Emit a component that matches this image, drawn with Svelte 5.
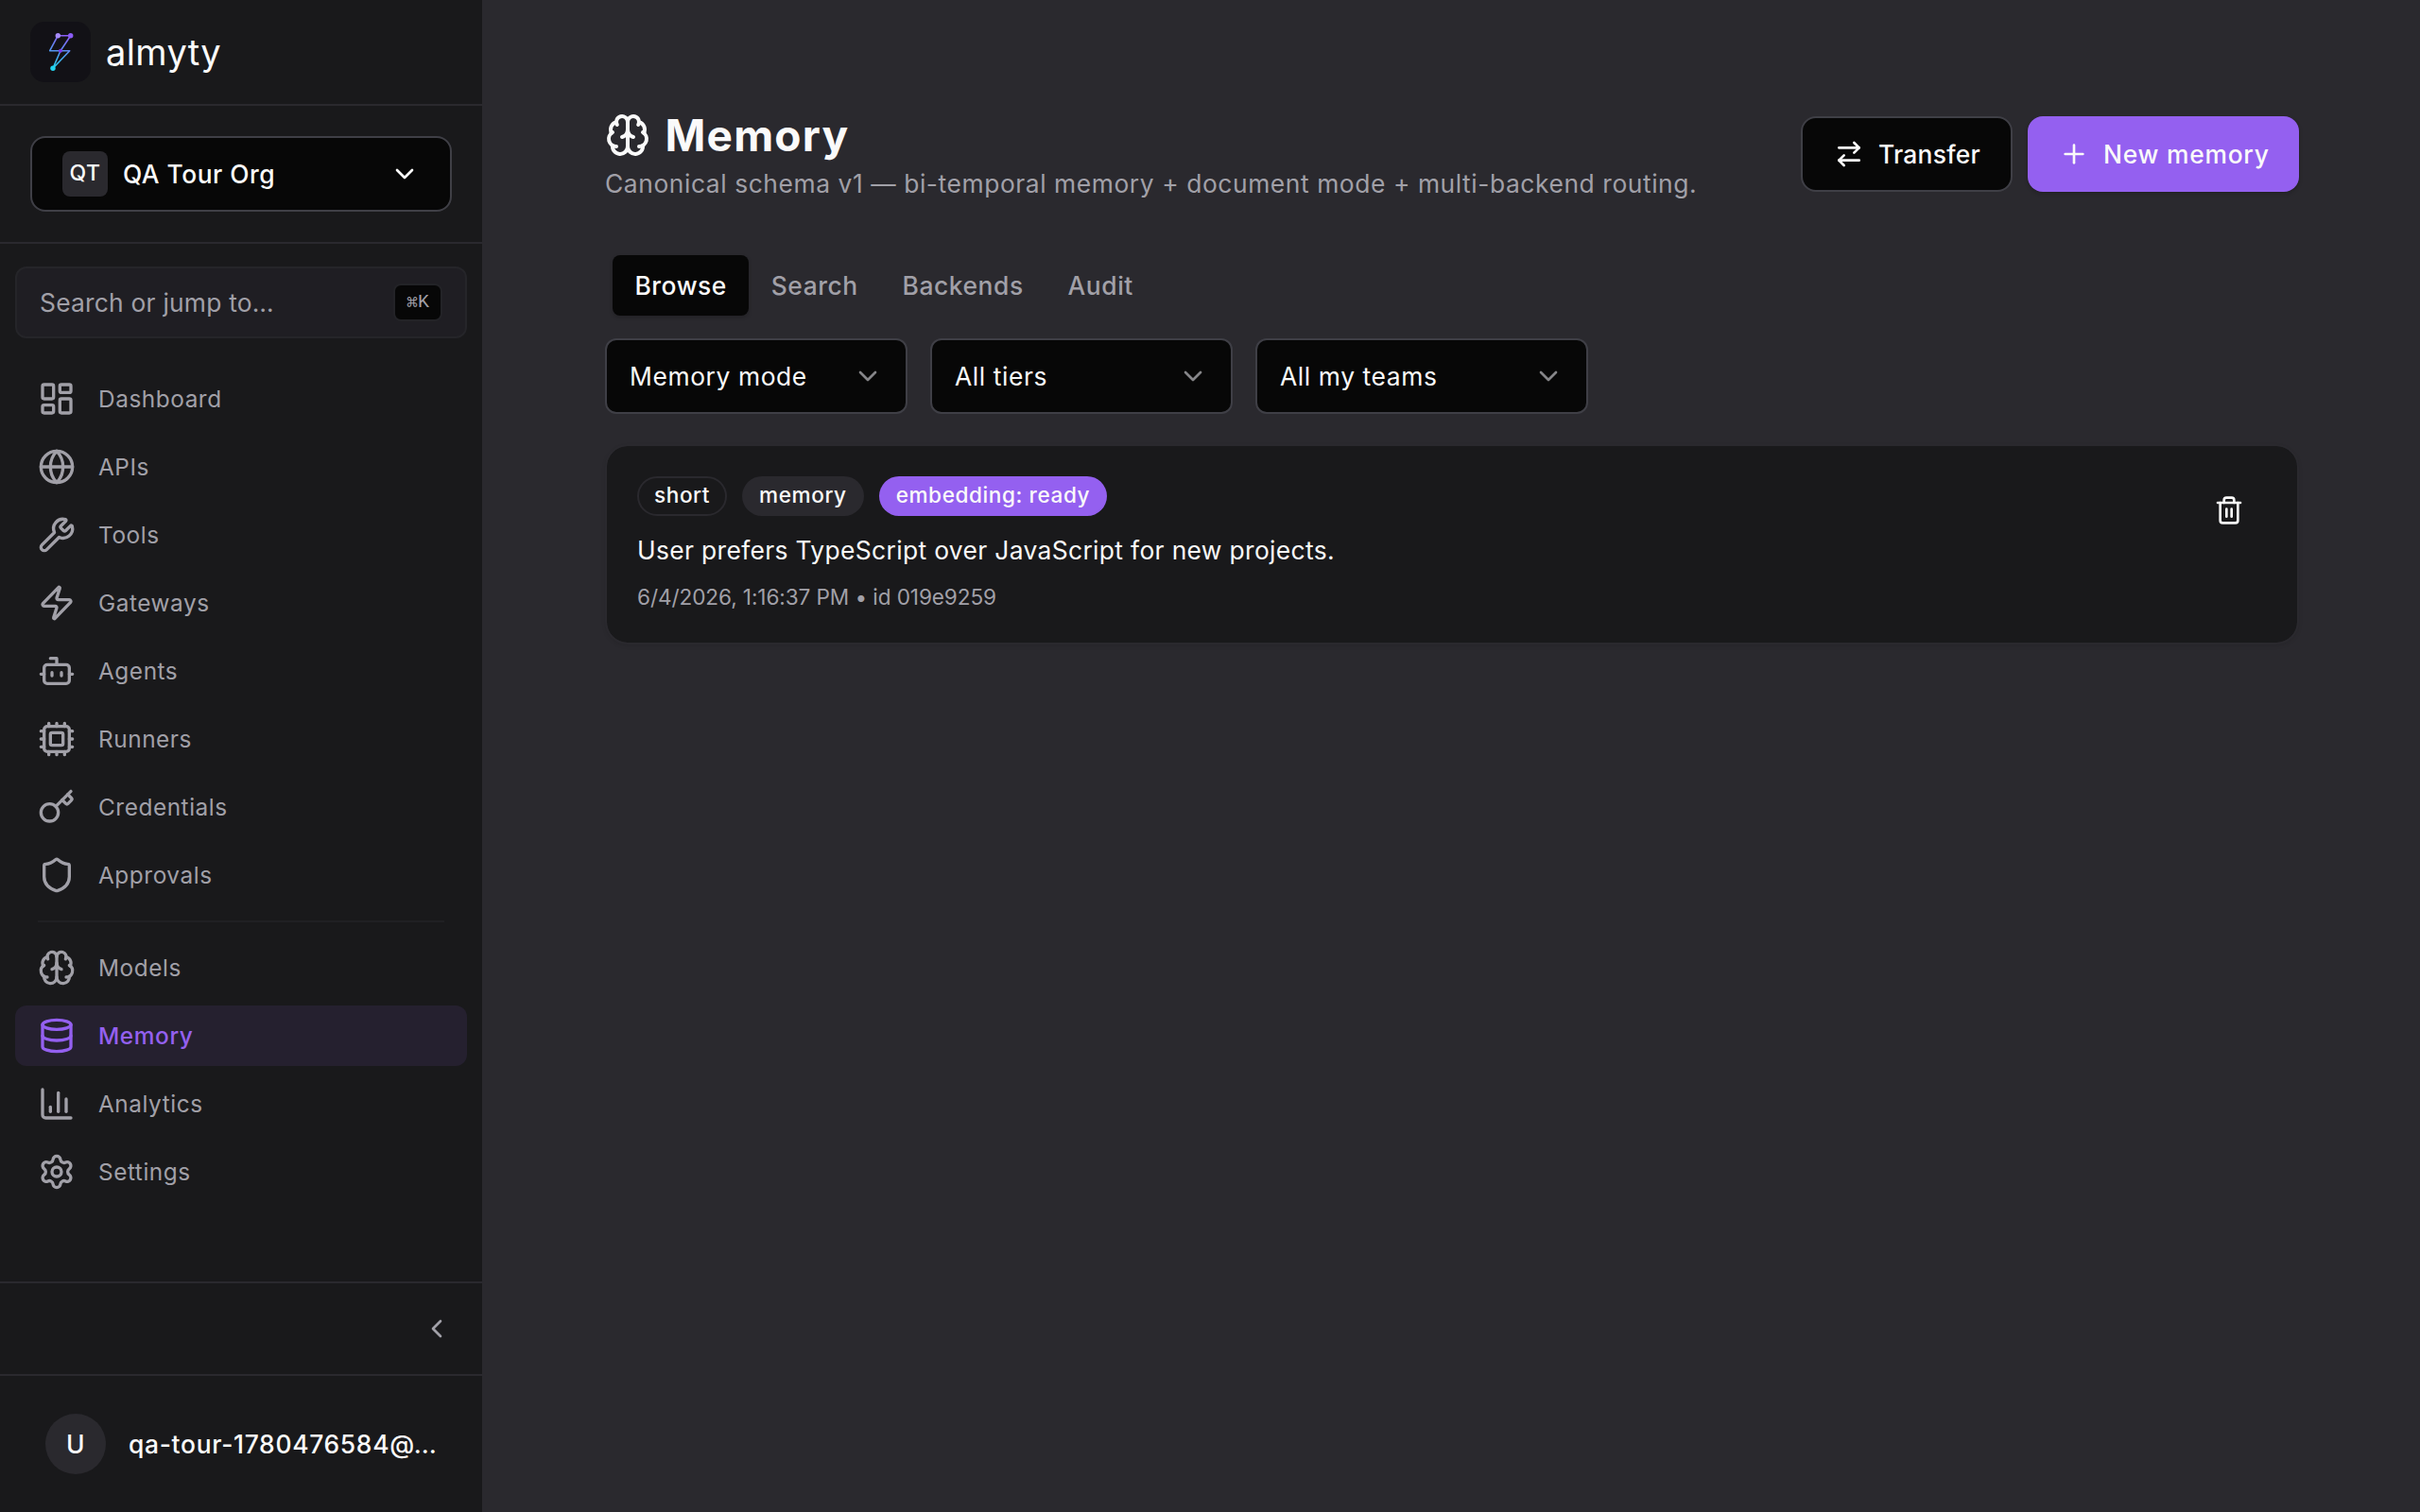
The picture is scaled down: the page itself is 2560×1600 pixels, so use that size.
<script>
  const icons = {
    dashboard: '<rect width="7" height="9" x="3" y="3" rx="1"/><rect width="7" height="5" x="14" y="3" rx="1"/><rect width="7" height="9" x="14" y="12" rx="1"/><rect width="7" height="5" x="3" y="16" rx="1"/>',
    globe: '<circle cx="12" cy="12" r="10"/><path d="M12 2a14.5 14.5 0 0 0 0 20 14.5 14.5 0 0 0 0-20"/><path d="M2 12h20"/>',
    wrench: '<path d="M14.7 6.3a1 1 0 0 0 0 1.4l1.6 1.6a1 1 0 0 0 1.4 0l3.106-3.105c.32-.322.863-.22.983.218a6 6 0 0 1-8.259 7.057l-7.91 7.91a1 1 0 0 1-2.999-3l7.91-7.91a6 6 0 0 1 7.057-8.259c.438.12.54.662.219.984z"/>',
    zap: '<path d="M4 14a1 1 0 0 1-.78-1.63l9.9-10.2a.5.5 0 0 1 .86.46l-1.92 6.02A1 1 0 0 0 13 10h7a1 1 0 0 1 .78 1.63l-9.9 10.2a.5.5 0 0 1-.86-.46l1.92-6.02A1 1 0 0 0 11 14z"/>',
    bot: '<path d="M12 8V4H8"/><rect width="16" height="12" x="4" y="8" rx="2"/><path d="M2 14h2M20 14h2M15 13v2M9 13v2"/>',
    cpu: '<path d="M12 20v2M12 2v2M17 20v2M17 2v2M2 12h2M2 17h2M2 7h2M20 12h2M20 17h2M20 7h2M7 20v2M7 2v2"/><rect x="4" y="4" width="16" height="16" rx="2"/><rect x="8" y="8" width="8" height="8" rx="1"/>',
    key: '<path d="m15.5 7.5 2.3 2.3a1 1 0 0 0 1.4 0l2.1-2.1a1 1 0 0 0 0-1.4L19 4"/><path d="m21 2-9.6 9.6"/><circle cx="7.5" cy="15.5" r="5.5"/>',
    shield: '<path d="M20 13c0 5-3.5 7.5-7.66 8.95a1 1 0 0 1-.67-.01C7.5 20.5 4 18 4 13V6a1 1 0 0 1 1-1c2 0 4.5-1.2 6.24-2.72a1.17 1.17 0 0 1 1.52 0C14.51 3.81 17 5 19 5a1 1 0 0 1 1 1z"/>',
    brain: '<path d="M12 18V5"/><path d="M15 13a4.17 4.17 0 0 1-3-4 4.17 4.17 0 0 1-3 4"/><path d="M17.598 6.5A3 3 0 1 0 12 5a3 3 0 1 0-5.598 1.5"/><path d="M17.997 5.125a4 4 0 0 1 2.526 5.77"/><path d="M18 18a4 4 0 0 0 2-7.464"/><path d="M19.967 17.483A4 4 0 1 1 12 18a4 4 0 1 1-7.967-.517"/><path d="M6 18a4 4 0 0 1-2-7.464"/><path d="M6.003 5.125a4 4 0 0 0-2.526 5.77"/>',
    database: '<ellipse cx="12" cy="5" rx="9" ry="3"/><path d="M3 5V19A9 3 0 0 0 21 19V5"/><path d="M3 12A9 3 0 0 0 21 12"/>',
    chart: '<path d="M3 3v16a2 2 0 0 0 2 2h16"/><path d="M18 17V9"/><path d="M13 17V5"/><path d="M8 17v-3"/>',
    settings: '<path d="M9.671 4.136a2.34 2.34 0 0 1 4.659 0 2.34 2.34 0 0 0 3.319 1.915 2.34 2.34 0 0 1 2.33 4.033 2.34 2.34 0 0 0 0 3.831 2.34 2.34 0 0 1-2.33 4.033 2.34 2.34 0 0 0-3.319 1.915 2.34 2.34 0 0 1-4.659 0 2.34 2.34 0 0 0-3.32-1.915 2.34 2.34 0 0 1-2.33-4.033 2.34 2.34 0 0 0 0-3.831A2.34 2.34 0 0 1 6.35 6.051a2.34 2.34 0 0 0 3.319-1.915"/><circle cx="12" cy="12" r="3"/>',
    down: '<path d="m6 9 6 6 6-6"/>',
    left: '<path d="m15 18-6-6 6-6"/>',
    swap: '<path d="m16 3 4 4-4 4"/><path d="M20 7H4"/><path d="m8 21-4-4 4-4"/><path d="M4 17h16"/>',
    plus: '<path d="M5 12h14"/><path d="M12 5v14"/>',
    trash: '<path d="M10 11v6"/><path d="M14 11v6"/><path d="M19 6v14a2 2 0 0 1-2 2H7a2 2 0 0 1-2-2V6"/><path d="M3 6h18"/><path d="M8 6V4a2 2 0 0 1 2-2h4a2 2 0 0 1 2 2v2"/>',
  };

  const platform = [
    ['Dashboard', 'dashboard'],
    ['APIs', 'globe'],
    ['Tools', 'wrench'],
    ['Gateways', 'zap'],
    ['Agents', 'bot'],
    ['Runners', 'cpu'],
    ['Credentials', 'key'],
    ['Approvals', 'shield'],
  ];
  const workspace = [
    ['Models', 'brain'],
    ['Memory', 'database'],
    ['Analytics', 'chart'],
    ['Settings', 'settings'],
  ];
  const current = 'Memory';
  const tabs = ['Browse', 'Search', 'Backends', 'Audit'];
  const filters = [
    { label: 'Memory mode', wide: false },
    { label: 'All tiers', wide: false },
    { label: 'All my teams', wide: true },
  ];
</script>

{#snippet icon(name, size)}
  <svg class="icon {size}" viewBox="0 0 24 24">{@html icons[name]}</svg>
{/snippet}

{#snippet navItem(label, glyph)}
  <div class="nav-item" class:active={label === current}>
    {@render icon(glyph, 'md')}
    <span>{label}</span>
  </div>
{/snippet}

<div class="app">
  <aside class="sidebar">
    <header class="brand">
      <svg class="logo" viewBox="0 0 64 64">
        <defs>
          <linearGradient id="bolt" gradientUnits="userSpaceOnUse" x1="36" y1="14" x2="26" y2="50">
            <stop offset="0" stop-color="#8b5cf6" />
            <stop offset="0.45" stop-color="#5b8def" />
            <stop offset="1" stop-color="#22d3ee" />
          </linearGradient>
        </defs>
        <rect width="64" height="64" rx="15" fill="#121116" />
        <path d="M29.3 14.7 20.7 30.7H41.7L24 49.3 32 30.7 42.7 14.7Z" fill="none" stroke="url(#bolt)" stroke-width="1.6" stroke-linejoin="round" />
        <circle cx="29.3" cy="14.7" r="2.7" fill="#a78bfa" />
        <circle cx="42.7" cy="14.7" r="2.7" fill="#8b5cf6" />
        <circle cx="32" cy="30.7" r="2" fill="#7c3aed" />
        <circle cx="24" cy="49.3" r="2.7" fill="#22d3ee" />
      </svg>
      <span class="wordmark">almyty</span>
    </header>

    <div class="org">
      <button class="org-button">
        <span class="org-initials">QT</span>
        <span class="org-name">QA Tour Org</span>
        {@render icon('down', 'sm')}
      </button>
    </div>

    <button class="search">
      <span>Search or jump to…</span>
      <kbd><span class="cmd">⌘</span>K</kbd>
    </button>

    <nav>
      {#each platform as [label, glyph]}
        {@render navItem(label, glyph)}
      {/each}
      <hr />
      {#each workspace as [label, glyph]}
        {@render navItem(label, glyph)}
      {/each}
    </nav>

    <div class="collapse">{@render icon('left', 'sm')}</div>

    <footer class="user">
      <span class="avatar">U</span>
      <span>qa-tour-1780476584@…</span>
    </footer>
  </aside>

  <main>
    <div class="page-head">
      <div class="heading">
        <h1>{@render icon('brain', 'lg')}<span>Memory</span></h1>
        <p class="subtitle">Canonical schema v1 — bi-temporal memory + document mode + multi-backend routing.</p>
      </div>
      <div class="actions">
        <button class="btn outline">{@render icon('swap', 'sm')}<span>Transfer</span></button>
        <button class="btn primary">{@render icon('plus', 'sm')}<span>New memory</span></button>
      </div>
    </div>

    <div class="tabs">
      {#each tabs as tab, i}
        <button class="tab" class:selected={i === 0}>{tab}</button>
      {/each}
    </div>

    <div class="filters">
      {#each filters as f}
        <button class="select" class:wide={f.wide}><span>{f.label}</span>{@render icon('down', 'sm')}</button>
      {/each}
    </div>

    <article class="card">
      <div>
        <div class="badges">
          <span class="badge tier">short</span>
          <span class="badge kind">memory</span>
          <span class="badge status">embedding: ready</span>
        </div>
        <p class="content">User prefers TypeScript over JavaScript for new projects.</p>
        <p class="meta">6/4/2026, 1:16:37 PM • id 019e9259</p>
      </div>
      <button class="delete">{@render icon('trash', 'sm')}</button>
    </article>
  </main>
</div>

<style>
  :global(body) {
    background: #2a292e;
  }
  .app {
    display: flex;
    width: 2560px;
    height: 1600px;
    overflow: hidden;
    background: #2a292e;
    color: #fafafa;
    font-family: Inter, 'Liberation Sans', sans-serif;
    font-size: 26.4px;
    line-height: 40px;
    letter-spacing: 0.6px;
    white-space: nowrap;
  }
  button,
  h1,
  p,
  hr,
  kbd,
  span {
    box-sizing: border-box;
    margin: 0;
  }
  button {
    padding: 0;
    border: 0;
    background: none;
    color: inherit;
    font: inherit;
    letter-spacing: inherit;
    text-align: left;
  }
  .icon {
    flex: none;
    fill: none;
    stroke: currentColor;
    stroke-width: 2;
    stroke-linecap: round;
    stroke-linejoin: round;
  }
  .sm { width: 32px; height: 32px; }
  .md { width: 40px; height: 40px; }
  .lg { width: 48px; height: 48px; }

  .sidebar {
    display: flex;
    flex: none;
    flex-direction: column;
    width: 510px;
    background: #19191b;
  }
  .brand {
    display: flex;
    align-items: center;
    gap: 16px;
    box-sizing: border-box;
    height: 112px;
    padding: 0 32px;
    border-bottom: 2px solid #2a292e;
  }
  .logo { width: 64px; height: 64px; }
  .wordmark { font-size: 38px; letter-spacing: 0.4px; }
  .org {
    padding: 32px;
    border-bottom: 2px solid #2a292e;
  }
  .org-button {
    display: flex;
    align-items: center;
    width: 446px;
    height: 80px;
    padding: 0 32px;
    border: 2px solid #3f3f46;
    border-radius: 16px;
    background: #070707;
    font-weight: 500;
    letter-spacing: 0.5px;
  }
  .org-initials {
    width: 48px;
    height: 48px;
    margin-right: 16px;
    border-radius: 8px;
    background: #2a292e;
    font-size: 23px;
    line-height: 46px;
    text-align: center;
  }
  .org-name { flex: 1; }
  .search {
    display: flex;
    align-items: center;
    justify-content: space-between;
    height: 76px;
    margin: 24px 16px 32px;
    padding: 0 24px;
    border: 2px solid #252529;
    border-radius: 12px;
    background: #1f1e23;
    color: #a1a0a8;
    letter-spacing: 0.22px;
  }
  kbd {
    display: flex;
    height: 40px;
    padding: 0 12px;
    border: 2px solid #232327;
    border-radius: 8px;
    background: #070707;
    font-family: 'Liberation Mono', monospace;
    font-size: 20px;
    line-height: 36px;
    letter-spacing: 0;
  }
  .cmd {
    width: 12px;
    font-family: 'DejaVu Sans Mono', monospace;
  }
  nav {
    display: flex;
    flex: 1;
    flex-direction: column;
    gap: 8px;
    padding: 0 16px;
  }
  .nav-item {
    display: flex;
    align-items: center;
    gap: 24px;
    height: 64px;
    padding: 0 24px;
    border-radius: 12px;
    color: #a1a0a8;
    font-size: 24.4px;
    letter-spacing: 0.54px;
  }
  .nav-item.active {
    background: #25202f;
    color: #9460f0;
    font-weight: 500;
    letter-spacing: 0.6px;
  }
  nav hr {
    width: 430px;
    height: 2px;
    margin: 8px 24px;
    border: 0;
    background: #202023;
  }
  .collapse {
    display: flex;
    align-items: center;
    justify-content: flex-end;
    height: 96px;
    padding: 0 32px;
    border-top: 2px solid #2a292e;
    color: #a1a0a8;
  }
  .user {
    display: flex;
    align-items: center;
    gap: 24px;
    height: 144px;
    padding: 0 48px;
    border-top: 2px solid #2a292e;
    font-weight: 500;
    letter-spacing: 0.7px;
  }
  .avatar {
    flex: none;
    width: 64px;
    height: 64px;
    border-radius: 50%;
    background: #2a292e;
    line-height: 64px;
    text-align: center;
  }

  main {
    flex: 1;
    padding: 119px 128px 0 130px;
  }
  .page-head {
    display: flex;
    align-items: center;
    justify-content: space-between;
    height: 88px;
  }
  .heading {
    align-self: flex-start;
  }
  h1 {
    display: flex;
    align-items: center;
    gap: 15.5px;
    height: 48px;
    font-size: 46px;
    font-weight: 700;
    letter-spacing: 1.2px;
  }
  .subtitle {
    height: 40px;
    margin-top: 7px;
    color: #a1a0a8;
    letter-spacing: 0.57px;
  }
  .actions {
    display: flex;
    gap: 16px;
  }
  .btn {
    display: flex;
    align-items: center;
    gap: 15px;
    height: 80px;
    border-radius: 16px;
    font-weight: 500;
  }
  .outline {
    width: 224px;
    padding: 0 0 0 33px;
    border: 2px solid #3f3f46;
    background: #070707;
    letter-spacing: 0.25px;
  }
  .primary {
    width: 287px;
    padding: 0 0 0 33px;
    background: #9460f0;
    box-shadow: 0 2px 4px rgba(0, 0, 0, 0.2);
    letter-spacing: 0.76px;
  }
  .tabs {
    display: flex;
    margin-top: 63px;
    padding: 0 8px;
  }
  .tab {
    height: 64px;
    padding: 0 23.4px;
    border-radius: 8px;
    color: #a1a0a8;
    font-weight: 500;
    letter-spacing: 0.57px;
  }
  .tab.selected {
    background: #070707;
    color: #fafafa;
    box-shadow: 0 2px 4px rgba(0, 0, 0, 0.2);
  }
  .filters {
    display: flex;
    gap: 24px;
    margin-top: 24px;
  }
  .select {
    display: flex;
    align-items: center;
    justify-content: space-between;
    width: 320px;
    height: 80px;
    padding: 0 24px;
    border: 2px solid #3f3f46;
    border-radius: 12px;
    background: #070707;
  }
  .select.wide { width: 352px; }
  .select .icon { color: #858588; }
  .card {
    display: flex;
    justify-content: space-between;
    box-sizing: border-box;
    height: 212px;
    margin-top: 32px;
    padding: 32px;
    border: 2px solid #2a292e;
    border-radius: 24px;
    background: #19191b;
    background-clip: padding-box;
    box-shadow: 0 2px 4px rgba(0, 0, 0, 0.08);
  }
  .badges {
    display: flex;
    gap: 16px;
    height: 42px;
  }
  .badge {
    padding: 0 16px;
    border: 2px solid transparent;
    border-radius: 21px;
    font-size: 22.6px;
    font-weight: 500;
    line-height: 36px;
    letter-spacing: 0.57px;
  }
  .tier { border-color: #2a292e; }
  .kind { background: #2a292e; }
  .status { background: #9460f0; }
  .content {
    padding-top: 16px;
    letter-spacing: 0.35px;
  }
  .meta {
    padding-top: 10px;
    color: #a1a0a8;
    font-size: 22.6px;
    letter-spacing: -0.1px;
  }
  .delete {
    display: flex;
    align-items: center;
    justify-content: center;
    width: 80px;
    height: 72px;
  }
</style>
